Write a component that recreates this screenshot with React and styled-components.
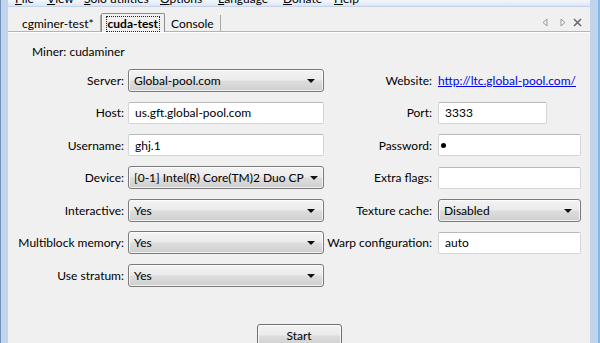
import React from 'react';
import styled, { createGlobalStyle } from 'styled-components';

const GlobalStyle = createGlobalStyle`
  html, body {
    margin: 0;
    padding: 0;
    background: #f0f0f0;
  }
  body {
    font-family: Lato, "Noto Sans", sans-serif;
    font-size: 12px;
    color: #000;
  }
`;

const Window = styled.div`
  width: 600px;
  height: 343px;
  display: flex;
  overflow: hidden;
  background: #f0f0f0;
`;

const FrameEdge = styled.div`
  width: ${(p) => p.w}px;
  flex-shrink: 0;
  background: #bfd5ee;
  border-left: ${(p) => (p.side === 'left' ? '1px solid #7592b8' : 'none')};
  border-right: ${(p) => (p.side === 'right' ? '2px solid #86b6e3' : 'none')};
  box-sizing: border-box;
`;

const Main = styled.div`
  flex: 1;
  display: flex;
  flex-direction: column;
  min-width: 0;
  min-height: 0;
`;

const MenuBar = styled.div`
  height: 6px;
  flex-shrink: 0;
  overflow: hidden;
  display: grid;
  grid-template-columns: 32px 37px 76px 58px 65px 51px auto;
  padding-left: 7px;
  background: linear-gradient(#f4f7fc, #dbe6f4);
  border-bottom: 1px solid #c5d3e6;
`;

const MenuItem = styled.span`
  margin-top: -9px;
  line-height: 16px;
  white-space: nowrap;
  u { text-decoration: underline; }
`;

const TabStrip = styled.div`
  height: 24px;
  flex-shrink: 0;
  display: flex;
  align-items: flex-end;
  padding-left: 8px;
  border-bottom: 1px solid #b4b4b4;
  box-shadow: 0 1px 0 #ffffff;
`;

const Tab = styled.div`
  height: ${(p) => (p.active ? 19 : 16)}px;
  display: flex;
  align-items: flex-end;
  padding: 0 ${(p) => (p.active ? 5 : 6)}px ${(p) => (p.active ? 1 : 0)}px;
  margin-bottom: ${(p) => (p.active ? -1 : 0)}px;
  font-weight: ${(p) => (p.active ? 700 : 400)};
  line-height: 14px;
  background: #f0f0f0;
  border: ${(p) => (p.active ? '1px solid #8c8c8c' : 'none')};
  border-bottom: none;
  border-right: ${(p) => (p.active ? '1px solid #8c8c8c' : '1px solid #a8a8a8')};
  border-radius: ${(p) => (p.active ? '2px 2px 0 0' : '0')};
  box-sizing: border-box;
  white-space: nowrap;
`;

const TabLabel = styled.span`
  padding: 0 1px;
  outline: ${(p) => (p.focused ? '1px dotted #222' : 'none')};
  line-height: 14px;
`;

const TabTools = styled.div`
  margin-left: auto;
  display: flex;
  align-items: center;
  height: 10px;
  padding-right: 8px;
  align-self: flex-start;
  margin-top: 10px;
`;

const ToolSlot = styled.span`
  display: flex;
  margin-left: ${(p) => p.gap}px;
`;

const Pane = styled.div`
  flex: 1;
  min-height: 0;
  padding: 12px 0 0 24px;
`;

const MinerTitle = styled.div`
  height: 16px;
  line-height: 16px;
`;

const Form = styled.div`
  display: grid;
  grid-template-columns: 120px 196px 114px 143px;
  grid-auto-rows: 32.5px;
  align-items: center;
  margin: 4px 0 0 -24px;
`;

const Label = styled.label`
  text-align: right;
  padding-right: ${(p) => p.pr || 4}px;
  white-space: nowrap;
`;

const Combo = styled.div`
  height: 23px;
  box-sizing: border-box;
  border: 1px solid #7a7a7a;
  border-radius: 3px;
  background: linear-gradient(#f3f3f3 0%, #ebebeb 48%, #dddddd 52%, #cfcfcf 100%);
  box-shadow: inset 0 0 0 1px rgba(255, 255, 255, 0.7);
  display: flex;
  align-items: center;
  padding: 0 8px 0 5px;
  justify-content: space-between;
  white-space: nowrap;
  overflow: hidden;
`;

const Arrow = styled.span`
  flex-shrink: 0;
  width: 0;
  height: 0;
  border-left: 4px solid transparent;
  border-right: 4px solid transparent;
  border-top: 4px solid #111;
  margin: 1px 0 0 6px;
`;

const TextBox = styled.div`
  height: 22px;
  width: ${(p) => (p.w ? `${p.w}px` : 'auto')};
  box-sizing: border-box;
  border: 1px solid #d5d5d5;
  border-top-color: #b9b9b9;
  border-radius: 2px;
  background: #fff;
  display: flex;
  align-items: center;
  padding-left: 6px;
  white-space: nowrap;
`;

const Dot = styled.span`
  width: 5px;
  height: 5px;
  margin-left: -4px;
  border-radius: 50%;
  background: #000;
`;

const Link = styled.a`
  color: #0000ee;
  text-decoration: underline;
  white-space: nowrap;
`;

const Footer = styled.div`
  display: flex;
  justify-content: center;
  margin: 32px 0 0 -24px;
`;

const Button = styled.div`
  width: 85px;
  height: 23px;
  box-sizing: border-box;
  border: 1px solid #707070;
  border-radius: 3px;
  background: linear-gradient(#f2f2f2 0%, #ebebeb 48%, #dddddd 52%, #cfcfcf 100%);
  box-shadow: inset 0 0 0 1px rgba(255, 255, 255, 0.7);
  display: flex;
  align-items: center;
  justify-content: center;
`;

const ToolIcon = ({ kind }) => {
  if (kind === 'x') {
    return (
      <svg width="9" height="9" viewBox="0 0 9 9">
        <path d="M1 1 L8 8 M8 1 L1 8" stroke="#6a6a6a" strokeWidth="1.6" />
      </svg>
    );
  }
  const d = kind === 'left' ? 'M6 1 L2 4.5 L6 8 Z' : 'M2 1 L6 4.5 L2 8 Z';
  return (
    <svg width="8" height="9" viewBox="0 0 8 9">
      <path d={d} fill="none" stroke="#9a9a9a" strokeWidth="1" />
    </svg>
  );
};

const menus = [
  ['F', 'ile'],
  ['V', 'iew'],
  ['S', 'olo utilities'],
  ['O', 'ptions'],
  ['L', 'anguage'],
  ['D', 'onate'],
  ['H', 'elp'],
];

export default function App() {
  return (
    <Window>
      <GlobalStyle />
      <FrameEdge side="left" w={8} />
      <Main>
        <MenuBar>
          {menus.map(([k, rest]) => (
            <MenuItem key={k}>
              <u>{k}</u>
              {rest}
            </MenuItem>
          ))}
        </MenuBar>
        <TabStrip>
          <Tab>cgminer-test*</Tab>
          <Tab active>
            <TabLabel focused>cuda-test</TabLabel>
          </Tab>
          <Tab>Console</Tab>
          <TabTools>
            <ToolSlot gap={0}>
              <ToolIcon kind="left" />
            </ToolSlot>
            <ToolSlot gap={10}>
              <ToolIcon kind="right" />
            </ToolSlot>
            <ToolSlot gap={6}>
              <ToolIcon kind="x" />
            </ToolSlot>
          </TabTools>
        </TabStrip>
        <Pane>
          <MinerTitle>Miner: cudaminer</MinerTitle>
          <Form>
            <Label>Server:</Label>
            <Combo>
              Global-pool.com
              <Arrow />
            </Combo>
            <Label pr={6}>Website:</Label>
            <div>
              <Link href="#">http://ltc.global-pool.com/</Link>
            </div>

            <Label>Host:</Label>
            <TextBox>us.gft.global-pool.com</TextBox>
            <Label pr={6}>Port:</Label>
            <TextBox w={109}>3333</TextBox>

            <Label>Username:</Label>
            <TextBox>ghj.1</TextBox>
            <Label pr={6}>Password:</Label>
            <TextBox>
              <Dot />
            </TextBox>

            <Label>Device:</Label>
            <Combo>
              [0-1] Intel(R) Core(TM)2 Duo CP
              <Arrow />
            </Combo>
            <Label pr={6}>Extra flags:</Label>
            <TextBox />

            <Label>Interactive:</Label>
            <Combo>
              Yes
              <Arrow />
            </Combo>
            <Label pr={6}>Texture cache:</Label>
            <Combo>
              Disabled
              <Arrow />
            </Combo>

            <Label>Multiblock memory:</Label>
            <Combo>
              Yes
              <Arrow />
            </Combo>
            <Label pr={6}>Warp configuration:</Label>
            <TextBox>auto</TextBox>

            <Label>Use stratum:</Label>
            <Combo>
              Yes
              <Arrow />
            </Combo>
          </Form>
          <Footer>
            <Button>Start</Button>
          </Footer>
        </Pane>
      </Main>
      <FrameEdge side="right" w={10} />
    </Window>
  );
}
